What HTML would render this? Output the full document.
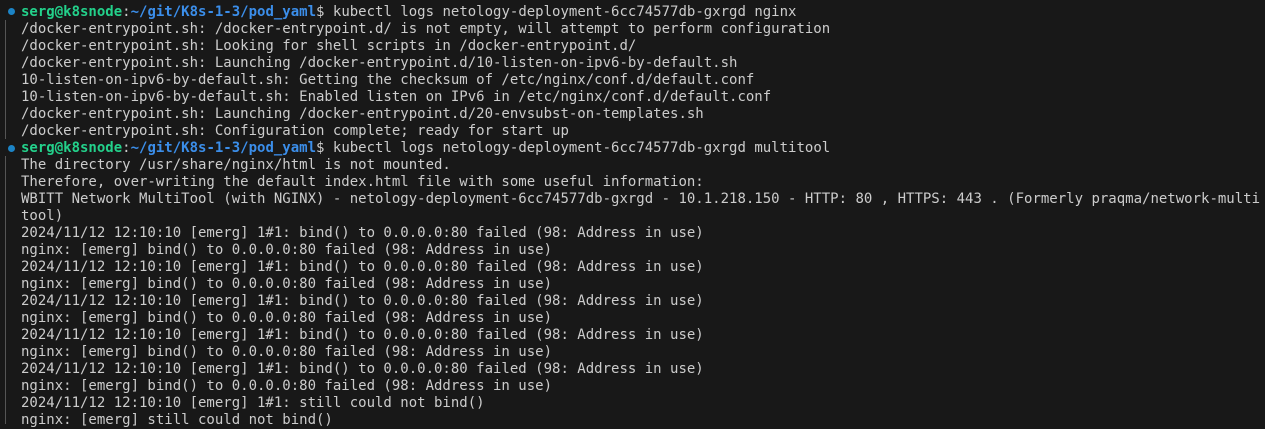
<!DOCTYPE html>
<html><head><style>
html,body{margin:0;padding:0;background:#181818;width:1265px;height:421px;overflow:hidden}
pre{margin:0;position:absolute;left:21px;top:4px;font-family:"DejaVu Sans Mono","Liberation Mono",monospace;font-size:14px;line-height:17px;color:#cccccc;white-space:pre}
.g{color:#23d18b;font-weight:bold}.b{color:#3b8eea;font-weight:bold}
.dot{position:absolute;left:8px;width:7px;height:7px;border-radius:50%;background:#1c84c6}
.bar{position:absolute;left:5px;width:1px;background:#555}
</style></head><body>
<div class="bar" style="top:20px;height:119px"></div>
<div class="bar" style="top:156px;height:268px"></div>
<div class="dot" style="top:8px"></div>
<div class="dot" style="top:145px"></div>
<pre><span class="g">serg@k8snode</span>:<span class="b">~/git/K8s-1-3/pod_yaml</span>$ kubectl logs netology-deployment-6cc74577db-gxrgd nginx
/docker-entrypoint.sh: /docker-entrypoint.d/ is not empty, will attempt to perform configuration
/docker-entrypoint.sh: Looking for shell scripts in /docker-entrypoint.d/
/docker-entrypoint.sh: Launching /docker-entrypoint.d/10-listen-on-ipv6-by-default.sh
10-listen-on-ipv6-by-default.sh: Getting the checksum of /etc/nginx/conf.d/default.conf
10-listen-on-ipv6-by-default.sh: Enabled listen on IPv6 in /etc/nginx/conf.d/default.conf
/docker-entrypoint.sh: Launching /docker-entrypoint.d/20-envsubst-on-templates.sh
/docker-entrypoint.sh: Configuration complete; ready for start up
<span class="g">serg@k8snode</span>:<span class="b">~/git/K8s-1-3/pod_yaml</span>$ kubectl logs netology-deployment-6cc74577db-gxrgd multitool
The directory /usr/share/nginx/html is not mounted.
Therefore, over-writing the default index.html file with some useful information:
WBITT Network MultiTool (with NGINX) - netology-deployment-6cc74577db-gxrgd - 10.1.218.150 - HTTP: 80 , HTTPS: 443 . (Formerly praqma/network-multi
tool)
2024/11/12 12:10:10 [emerg] 1#1: bind() to 0.0.0.0:80 failed (98: Address in use)
nginx: [emerg] bind() to 0.0.0.0:80 failed (98: Address in use)
2024/11/12 12:10:10 [emerg] 1#1: bind() to 0.0.0.0:80 failed (98: Address in use)
nginx: [emerg] bind() to 0.0.0.0:80 failed (98: Address in use)
2024/11/12 12:10:10 [emerg] 1#1: bind() to 0.0.0.0:80 failed (98: Address in use)
nginx: [emerg] bind() to 0.0.0.0:80 failed (98: Address in use)
2024/11/12 12:10:10 [emerg] 1#1: bind() to 0.0.0.0:80 failed (98: Address in use)
nginx: [emerg] bind() to 0.0.0.0:80 failed (98: Address in use)
2024/11/12 12:10:10 [emerg] 1#1: bind() to 0.0.0.0:80 failed (98: Address in use)
nginx: [emerg] bind() to 0.0.0.0:80 failed (98: Address in use)
2024/11/12 12:10:10 [emerg] 1#1: still could not bind()
nginx: [emerg] still could not bind()</pre>
</body></html>
